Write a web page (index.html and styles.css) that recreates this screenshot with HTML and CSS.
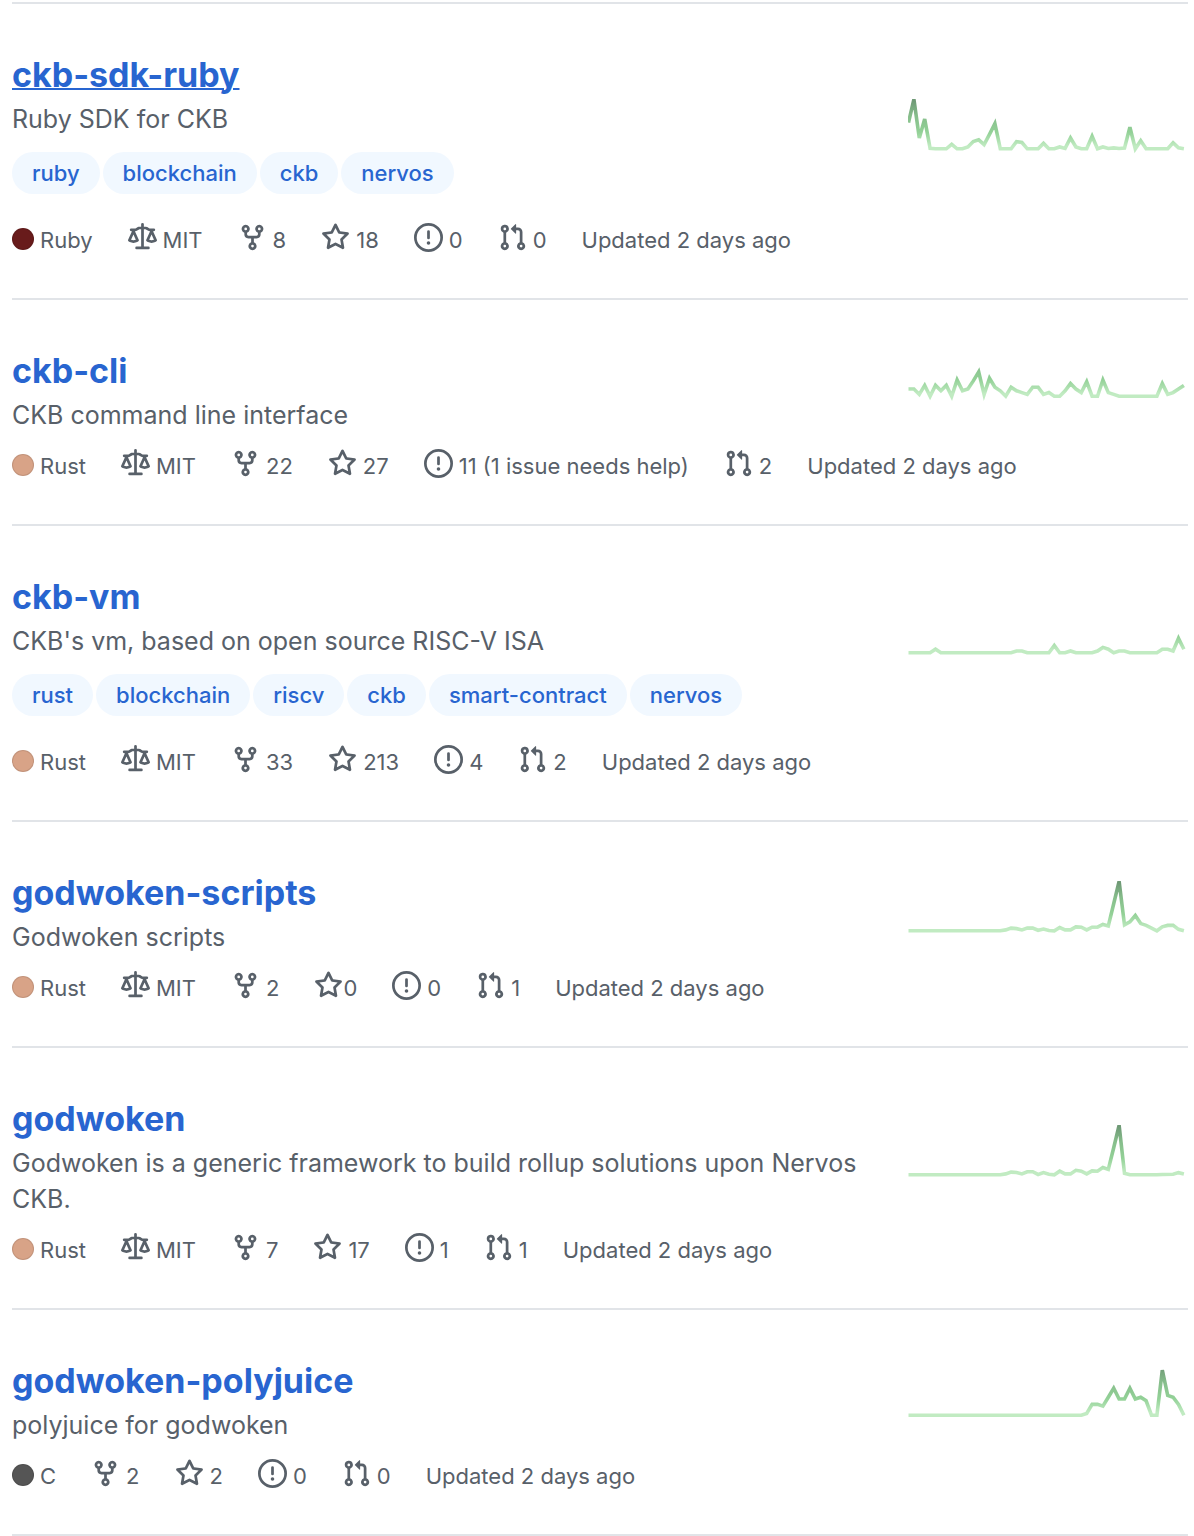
FILE: index.html
```html
<!DOCTYPE html>
<html lang="en">
<head>
    <meta charset="UTF-8">
    <meta name="viewport" content="width=device-width, initial-scale=1.0">
    <title>Repositories</title>
    <link rel="stylesheet" href="styles.css">
</head>
<body>
    <!-- Shared icons and graph gradient -->
    <svg class="defs" width="0" height="0" aria-hidden="true">
        <defs>
            <linearGradient id="activity" gradientUnits="userSpaceOnUse" x1="0" y1="0" x2="0" y2="28">
                <stop offset="5%" stop-color="#c1ebc2"></stop>
                <stop offset="33%" stop-color="#93d197"></stop>
                <stop offset="66%" stop-color="#86bd8b"></stop>
                <stop offset="95%" stop-color="#6f9a76"></stop>
            </linearGradient>
            <symbol id="law" viewBox="0 0 16 16"><path fill-rule="evenodd" d="M8.75.75a.75.75 0 00-1.5 0V2h-.984c-.305 0-.604.08-.869.23l-1.288.737A.25.25 0 013.984 3H1.75a.75.75 0 000 1.5h.428L.066 9.192a.75.75 0 00.154.838l.53-.53-.53.53v.001l.002.002.002.002.006.006.016.015.045.04a3.514 3.514 0 00.686.45A4.492 4.492 0 003 11c.88 0 1.556-.22 2.023-.454a3.515 3.515 0 00.686-.45l.045-.04.016-.015.006-.006.002-.002.001-.002L5.25 9.5l.53.53a.75.75 0 00.154-.838L3.822 4.5h.162c.305 0 .604-.08.869-.23l1.289-.737a.25.25 0 01.124-.033h.984V13h-2.5a.75.75 0 000 1.5h6.5a.75.75 0 000-1.5h-2.5V3.5h.984a.25.25 0 01.124.033l1.29.736c.264.152.563.231.868.231h.162l-2.112 4.692a.75.75 0 00.154.838l.53-.53-.53.53v.001l.002.002.002.002.006.006.016.015.045.04a3.517 3.517 0 00.686.45A4.492 4.492 0 0013 11c.88 0 1.556-.22 2.023-.454a3.512 3.512 0 00.686-.45l.045-.04.01-.01.006-.005.006-.006.002-.002.001-.002-.529-.531.53.53a.75.75 0 00.154-.838L13.823 4.5h.427a.75.75 0 000-1.5h-2.234a.25.25 0 01-.124-.033l-1.29-.736A1.75 1.75 0 009.735 2H8.75V.75zM1.695 9.227c.285.135.718.273 1.305.273s1.02-.138 1.305-.273L3 6.327l-1.305 2.9zm10 0c.285.135.718.273 1.305.273s1.02-.138 1.305-.273L13 6.327l-1.305 2.9z"/></symbol>
            <symbol id="fork" viewBox="0 0 16 16"><path fill-rule="evenodd" d="M5 3.25a.75.75 0 11-1.5 0 .75.75 0 011.5 0zm0 2.122a2.25 2.25 0 10-1.5 0v.878A2.25 2.25 0 005.75 8.5h1.5v2.128a2.251 2.251 0 101.5 0V8.5h1.5a2.25 2.25 0 002.25-2.25v-.878a2.25 2.25 0 10-1.5 0v.878a.75.75 0 01-.75.75h-4.5A.75.75 0 015 6.25v-.878zm3.75 7.378a.75.75 0 11-1.5 0 .75.75 0 011.5 0zm3-8.75a.75.75 0 100-1.5.75.75 0 000 1.5z"/></symbol>
            <symbol id="star" viewBox="0 0 16 16"><path fill-rule="evenodd" d="M8 .25a.75.75 0 01.673.418l1.882 3.815 4.21.612a.75.75 0 01.416 1.279l-3.046 2.97.719 4.192a.75.75 0 01-1.088.791L8 12.347l-3.766 1.98a.75.75 0 01-1.088-.79l.72-4.194L.818 6.374a.75.75 0 01.416-1.28l4.21-.611L7.327.668A.75.75 0 018 .25zm0 2.445L6.615 5.5a.75.75 0 01-.564.41l-3.097.45 2.24 2.184a.75.75 0 01.216.664l-.528 3.084 2.769-1.456a.75.75 0 01.698 0l2.77 1.456-.53-3.084a.75.75 0 01.216-.664l2.24-2.183-3.096-.45a.75.75 0 01-.564-.41L8 2.694v.001z"/></symbol>
            <symbol id="issue" viewBox="0 0 16 16"><path fill-rule="evenodd" d="M8 1.5a6.5 6.5 0 100 13 6.5 6.5 0 000-13zM0 8a8 8 0 1116 0A8 8 0 010 8zm9 3a1 1 0 11-2 0 1 1 0 012 0zm-.25-6.25a.75.75 0 00-1.5 0v3.5a.75.75 0 001.5 0v-3.5z"/></symbol>
            <symbol id="pull" viewBox="0 0 16 16"><path fill-rule="evenodd" d="M7.177 3.073L9.573.677A.25.25 0 0110 .854v4.792a.25.25 0 01-.427.177L7.177 3.427a.25.25 0 010-.354zM3.75 2.5a.75.75 0 100 1.5.75.75 0 000-1.5zm-2.25.75a2.25 2.25 0 113 2.122v5.256a2.251 2.251 0 11-1.5 0V5.372A2.25 2.25 0 011.5 3.25zM11 2.5h-1V4h1a1 1 0 011 1v5.628a2.251 2.251 0 101.5 0V5A2.5 2.5 0 0011 2.5zm1 10.25a.75.75 0 111.5 0 .75.75 0 01-1.5 0zM3.75 12a.75.75 0 100 1.5.75.75 0 000-1.5z"/></symbol>
        </defs>
    </svg>

    <ul class="repo-list">
        <li class="repo">
            <div class="repo-main">
                <h3><a class="hovered" href="#">ckb-sdk-ruby</a></h3>
                <p>Ruby SDK for CKB</p>
                <div class="tags">
                    <a href="#">ruby</a>
                    <a href="#">blockchain</a>
                    <a href="#">ckb</a>
                    <a href="#">nervos</a>
                </div>
                <div class="meta">
                    <span class="item"><span class="dot ruby"></span>Ruby</span>
                    <span class="item"><svg class="icon"><use href="#law"/></svg>MIT</span>
                    <a class="item" href="#"><svg class="icon"><use href="#fork"/></svg>8</a>
                    <a class="item" href="#"><svg class="icon"><use href="#star"/></svg>18</a>
                    <a class="item" href="#"><svg class="icon"><use href="#issue"/></svg>0</a>
                    <a class="item" href="#"><svg class="icon"><use href="#pull"/></svg>0</a>
                    <span>Updated 2 days ago</span>
                </div>
            </div>
            <svg class="graph" viewBox="0 0 155 60">
                <polyline transform="translate(0,56) scale(1,-1)" points="0,14.5 3,27.5 6,6 9,16.5 12,.3 15,0 18,0 21,0 24,2.5 27,0 30,0 33,1 36,4 39,5 42,2.3 45,8 48,14 51,0 54,0 57,0 60,4 63,3.5 66,0 69,0 72,0 75,3 78,0 81,0 84,1 87,.2 90,6 93,1 96,0 99,0 102,7 105,0 108,1 111,.2 114,.5 117,.2 120,.4 123,12 126,0 129,4.5 132,0 135,0 138,0 141,0 144,0 147,3.3 150,.5 153,0"/>
            </svg>
        </li>

        <li class="repo">
            <div class="repo-main">
                <h3><a href="#">ckb-cli</a></h3>
                <p>CKB command line interface</p>
                <div class="meta">
                    <span class="item"><span class="dot rust"></span>Rust</span>
                    <span class="item"><svg class="icon"><use href="#law"/></svg>MIT</span>
                    <a class="item" href="#"><svg class="icon"><use href="#fork"/></svg>22</a>
                    <a class="item" href="#"><svg class="icon"><use href="#star"/></svg>27</a>
                    <a class="item" href="#"><svg class="icon"><use href="#issue"/></svg>11 (1 issue needs help)</a>
                    <a class="item" href="#"><svg class="icon"><use href="#pull"/></svg>2</a>
                    <span>Updated 2 days ago</span>
                </div>
            </div>
            <svg class="graph" viewBox="0 0 155 60">
                <polyline transform="translate(0,29) scale(1,-1)" points="0,4 3,4 6,1 9,6 12,0 15,6 18,3 21,6 24,0 27,9 30,3 33,4 36,8.5 39,13.5 42,1 45,10 48,5 51,3 54,0 57,5 60,3 63,2 66,1 69,5 72,5 75,1 78,2 81,0 84,0 87,3 90,7 93,4 96,2 99,8 102,0 105,0 108,9 111,2 114,1 117,0 120,0 138,0 141,7 144,1 147,2 150,4 153,6"/>
            </svg>
        </li>

        <li class="repo">
            <div class="repo-main">
                <h3><a href="#">ckb-vm</a></h3>
                <p>CKB's vm, based on open source RISC-V ISA</p>
                <div class="tags">
                    <a href="#">rust</a>
                    <a href="#">blockchain</a>
                    <a href="#">riscv</a>
                    <a href="#">ckb</a>
                    <a href="#">smart-contract</a>
                    <a href="#">nervos</a>
                </div>
                <div class="meta">
                    <span class="item"><span class="dot rust"></span>Rust</span>
                    <span class="item"><svg class="icon"><use href="#law"/></svg>MIT</span>
                    <a class="item" href="#"><svg class="icon"><use href="#fork"/></svg>33</a>
                    <a class="item" href="#"><svg class="icon"><use href="#star"/></svg>213</a>
                    <a class="item" href="#"><svg class="icon"><use href="#issue"/></svg>4</a>
                    <a class="item" href="#"><svg class="icon"><use href="#pull"/></svg>2</a>
                    <span>Updated 2 days ago</span>
                </div>
            </div>
            <svg class="graph" viewBox="0 0 155 60">
                <polyline transform="translate(0,46) scale(1,-1)" points="0,0 12,0 15,2 18,0 57,0 60,1 63,1 66,0 78,0 81,4 84,0 87,0 90,1 93,0 102,0 105,1 108,3 111,2 114,0 117,1 120,1 123,0 138,0 141,2 144,2 147,1 150,8 153,2"/>
            </svg>
        </li>

        <li class="repo">
            <div class="repo-main">
                <h3><a href="#">godwoken-scripts</a></h3>
                <p>Godwoken scripts</p>
                <div class="meta">
                    <span class="item"><span class="dot rust"></span>Rust</span>
                    <span class="item"><svg class="icon"><use href="#law"/></svg>MIT</span>
                    <a class="item" href="#"><svg class="icon"><use href="#fork"/></svg>2</a>
                    <a class="item tight" href="#"><svg class="icon"><use href="#star"/></svg>0</a>
                    <a class="item" href="#"><svg class="icon"><use href="#issue"/></svg>0</a>
                    <a class="item" href="#"><svg class="icon"><use href="#pull"/></svg>1</a>
                    <span>Updated 2 days ago</span>
                </div>
            </div>
            <svg class="graph" viewBox="0 0 155 60">
                <polyline transform="translate(0,36) scale(1,-1)" points="0,0 51,0 54,.5 57,1.5 60,1.2 63,.5 66,1.5 69,1.5 72,.3 75,1 78,.2 81,0 84,1.8 87,.5 90,.5 93,2.2 96,2 99,.5 102,2 105,2 108,3.5 111,2.7 114,15 117,27.5 120,3.3 123,5 126,8.5 129,4 132,3 135,1.5 138,0 141,2.2 144,3 147,3 150,.8 153,0"/>
            </svg>
        </li>

        <li class="repo">
            <div class="repo-main">
                <h3><a href="#">godwoken</a></h3>
                <p>Godwoken is a generic framework to build rollup solutions upon Nervos CKB.</p>
                <div class="meta">
                    <span class="item"><span class="dot rust"></span>Rust</span>
                    <span class="item"><svg class="icon"><use href="#law"/></svg>MIT</span>
                    <a class="item" href="#"><svg class="icon"><use href="#fork"/></svg>7</a>
                    <a class="item" href="#"><svg class="icon"><use href="#star"/></svg>17</a>
                    <a class="item" href="#"><svg class="icon"><use href="#issue"/></svg>1</a>
                    <a class="item" href="#"><svg class="icon"><use href="#pull"/></svg>1</a>
                    <span>Updated 2 days ago</span>
                </div>
            </div>
            <svg class="graph" viewBox="0 0 155 60">
                <polyline transform="translate(0,46) scale(1,-1)" points="0,0 51,0 54,.5 57,1.5 60,1.3 63,.5 66,1.7 69,1.7 72,.2 75,1.2 78,.3 81,0 84,2 87,.5 90,.5 93,2.5 96,2 99,.5 102,2.2 105,2 108,4 111,3 114,15 117,27.5 120,.8 123,0 138,0 141,.2 147,.3 150,1.2 153,.5"/>
            </svg>
        </li>

        <li class="repo">
            <div class="repo-main">
                <h3><a href="#">godwoken-polyjuice</a></h3>
                <p>polyjuice for godwoken</p>
                <div class="meta">
                    <span class="item"><span class="dot c"></span>C</span>
                    <a class="item" href="#"><svg class="icon"><use href="#fork"/></svg>2</a>
                    <a class="item" href="#"><svg class="icon"><use href="#star"/></svg>2</a>
                    <a class="item" href="#"><svg class="icon"><use href="#issue"/></svg>0</a>
                    <a class="item" href="#"><svg class="icon"><use href="#pull"/></svg>0</a>
                    <span>Updated 2 days ago</span>
                </div>
            </div>
            <svg class="graph" viewBox="0 0 155 60">
                <polyline transform="translate(0,34) scale(1,-1)" points="0,0 96,0 99,1 102,6 105,6 108,5 111,10 114,15 117,9 120,9 123,15 126,9 129,10 132,8 135,0 138,0 141,25 144,11 147,10 150,6 153,0"/>
            </svg>
        </li>
    </ul>
</body>
</html>
```
FILE: styles.css
```css
* {
    box-sizing: border-box;
}
body {
    margin: 0;
    padding: 2px 6px 0 12px;
    font-family: Inter, "Liberation Sans", sans-serif;
    font-size: 22px;
    color: #586069;
    background-color: #fff;
}
a {
    color: inherit;
    text-decoration: none;
}
.defs {
    position: absolute;
}
.repo-list {
    margin: 0;
    padding: 0;
    list-style: none;
    border-top: 2px solid #e1e4e8;
}
.repo {
    display: flex;
    justify-content: space-between;
    padding: 47px 0 41px;
    border-bottom: 2px solid #e1e4e8;
}
.repo-main {
    flex: 1;
    min-width: 0;
    padding-right: 40px;
}
.repo h3 {
    margin: 0;
    font-size: 34px;
    font-weight: 700;
    line-height: 48px;
    color: #2865d0;
}
.repo h3 a.hovered {
    text-decoration: underline;
    text-decoration-thickness: 2px;
}
.repo p {
    margin: 2px 0 0;
    font-size: 25px;
    line-height: 36px;
}
.tags {
    display: flex;
    flex-wrap: wrap;
    gap: 3px;
    margin: 15px 0 29px;
}
.tags a {
    padding: 0 20px;
    border-radius: 21px;
    font-weight: 500;
    line-height: 42px;
    color: #2865d0;
    background-color: #f1f8ff;
}
/* Long rows may run on below the graph */
.meta {
    display: flex;
    gap: 35px;
    line-height: 34px;
    white-space: nowrap;
}
p + .meta {
    margin-top: 16px;
}
.item {
    display: flex;
    flex: none;
    gap: 6px;
}
.item.tight {
    gap: 0;
}
.icon {
    width: 29px;
    height: 29px;
    fill: currentColor;
}
.dot {
    width: 22px;
    height: 22px;
    margin-top: 5px;
    border: 1px solid rgba(0, 0, 0, 0.1);
    border-radius: 50%;
}
.ruby {
    background-color: #681b1b;
}
.rust {
    background-color: #d8a387;
}
.c {
    background-color: #555;
}
.graph {
    flex: none;
    width: 280px;
    height: 108px;
    margin: -3px 0 -20px;
}
.graph polyline {
    fill: none;
    stroke: url(#activity);
    stroke-width: 2;
}
```
